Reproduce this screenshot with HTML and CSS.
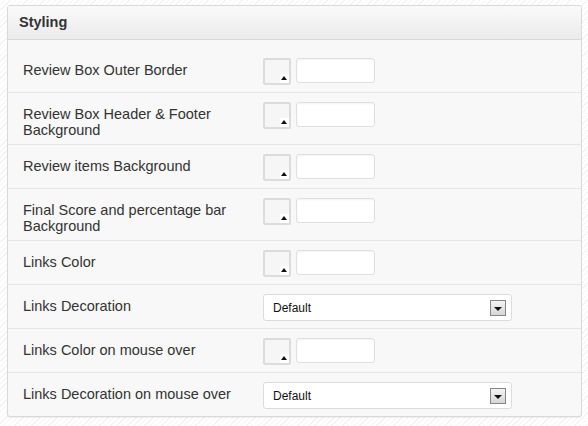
FILE: index.html
```html
<!DOCTYPE html>
<html>
<head>
<meta charset="utf-8">
<link rel="stylesheet" href="styles.css">
</head>
<body>
<div class="panel">
  <div class="panel-head">Styling</div>
  <div class="rows">
    <div class="row">
      <div class="label">Review Box Outer Border</div>
      <div class="control"><span class="swatch"><span class="swatch-tab"></span></span><span class="hex"></span></div>
    </div>
    <div class="row">
      <div class="label">Review Box Header &amp; Footer Background</div>
      <div class="control"><span class="swatch"><span class="swatch-tab"></span></span><span class="hex"></span></div>
    </div>
    <div class="row">
      <div class="label">Review items Background</div>
      <div class="control"><span class="swatch"><span class="swatch-tab"></span></span><span class="hex"></span></div>
    </div>
    <div class="row">
      <div class="label">Final Score and percentage bar Background</div>
      <div class="control"><span class="swatch"><span class="swatch-tab"></span></span><span class="hex"></span></div>
    </div>
    <div class="row">
      <div class="label">Links Color</div>
      <div class="control"><span class="swatch"><span class="swatch-tab"></span></span><span class="hex"></span></div>
    </div>
    <div class="row">
      <div class="label">Links Decoration</div>
      <div class="control"><div class="select"><span class="select-text">Default</span><span class="select-btn"></span></div></div>
    </div>
    <div class="row">
      <div class="label">Links Color on mouse over</div>
      <div class="control"><span class="swatch"><span class="swatch-tab"></span></span><span class="hex"></span></div>
    </div>
    <div class="row">
      <div class="label">Links Decoration on mouse over</div>
      <div class="control"><div class="select"><span class="select-text">Default</span><span class="select-btn"></span></div></div>
    </div>
  </div>
</div>
</body>
</html>
```
FILE: styles.css
```css
html, body {
  margin: 0;
  padding: 0;
}
body {
  width: 588px;
  height: 426px;
  padding: 5px 6px 0 7px;
  box-sizing: border-box;
  font-family: "Liberation Sans", Arial, sans-serif;
  color: #333;
  background: repeating-linear-gradient(135deg, #ffffff 0, #ffffff 3px, #f3f3f3 3px, #f3f3f3 4px);
}
.panel {
  border: 1px solid #d9d9d9;
  border-radius: 3px;
  background: #f8f8f8;
  box-shadow: 0 1px 1px rgba(0,0,0,0.06);
  overflow: hidden;
}
.panel-head {
  height: 34px;
  box-sizing: border-box;
  padding: 8px 0 0 11px;
  font-size: 14.5px;
  line-height: 17px;
  font-weight: bold;
  color: #333;
  background: linear-gradient(#fafafa, #ebebeb);
  border-bottom: 1px solid #d9d9d9;
}
.rows {
  padding-top: 9px;
}
.row {
  display: grid;
  grid-template-columns: 255px 1fr;
  min-height: 43px;
  border-top: 1px solid #e6e6e6;
}
.row:first-child {
  border-top: none;
}
.label {
  padding: 13px 10px 6px 15px;
  font-size: 14.5px;
  line-height: 16px;
  color: #333;
}
.control {
  padding-top: 9px;
  display: flex;
  align-items: flex-start;
  gap: 5px;
}
.swatch {
  position: relative;
  width: 28px;
  height: 27px;
  box-sizing: border-box;
  border: 2px solid #dcdcdc;
  border-radius: 2px;
  background: #f6f6f6;
}
.swatch-tab {
  position: absolute;
  right: 0;
  bottom: 0;
  width: 9px;
  height: 9px;
  background: #ffffff;
}
.swatch-tab::after {
  content: "";
  position: absolute;
  left: 1px;
  top: 2px;
  border-left: 3.5px solid transparent;
  border-right: 3.5px solid transparent;
  border-bottom: 4px solid #111;
}
.hex {
  width: 79px;
  height: 25px;
  box-sizing: border-box;
  border: 1px solid #dfdfdf;
  border-radius: 3px;
  background: #fff;
  box-shadow: inset 0 1px 2px rgba(0,0,0,0.05);
}
.select {
  width: 249px;
  height: 27px;
  box-sizing: border-box;
  border: 1px solid #dcdcdc;
  border-radius: 3px;
  background: #fff;
  display: flex;
  align-items: center;
  justify-content: space-between;
  padding: 0 5px 0 9px;
}
.select-text {
  font-size: 12px;
  color: #111;
}
.select-btn {
  position: relative;
  width: 16px;
  height: 16px;
  box-sizing: border-box;
  border: 1px solid #858585;
  background: linear-gradient(#f4f4f4, #d6d6d6);
}
.select-btn::after {
  content: "";
  position: absolute;
  left: 3px;
  top: 6px;
  border-left: 4px solid transparent;
  border-right: 4px solid transparent;
  border-top: 4px solid #111;
}
```
